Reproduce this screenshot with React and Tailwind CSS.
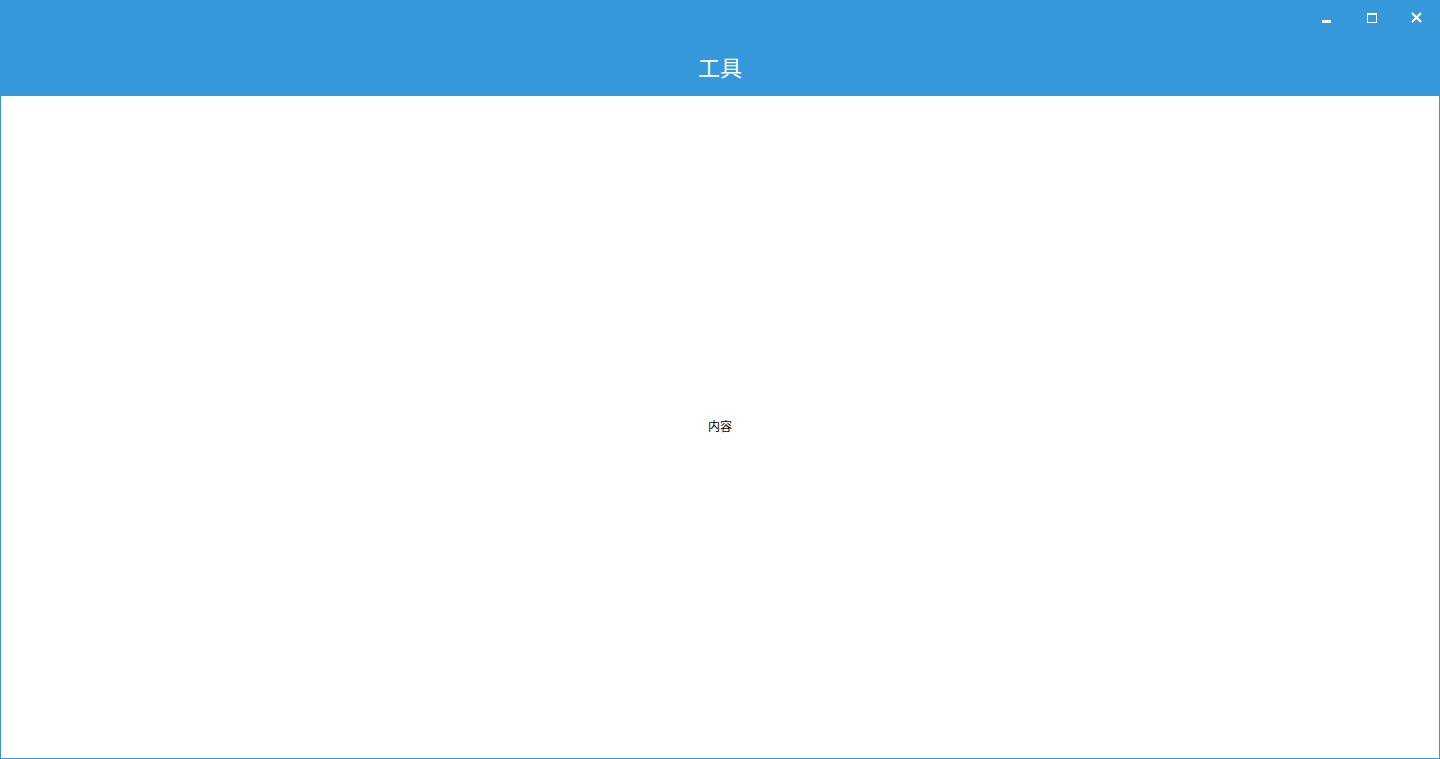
function TitleButton({ children }) {
  return (
    <button className="w-[45px] h-[36px] flex items-center justify-center text-white hover:bg-white/10">
      {children}
    </button>
  );
}

export default function App() {
  return (
    <div
      className="w-[1440px] h-[759px] flex flex-col bg-white"
      style={{ fontFamily: '"Noto Sans CJK SC", "Liberation Sans", sans-serif' }}
    >
      <div className="h-[96px] bg-[#3598db] flex flex-col">
        <div className="h-[40px] flex justify-end items-start pr-[1px]">
          <TitleButton>
            <div className="w-[9px] h-[3px] bg-white mt-[7px]" />
          </TitleButton>
          <TitleButton>
            <svg width="10" height="10" viewBox="0 0 10 10" className="mt-[-1px]">
              <rect x="0" y="0" width="10" height="2" fill="white" />
              <rect x="0.5" y="1.5" width="9" height="8" fill="none" stroke="white" strokeWidth="1" />
            </svg>
          </TitleButton>
          <TitleButton>
            <svg width="11" height="11" viewBox="0 0 11 11" className="mt-[-1px]">
              <path d="M1 1 L10 10 M10 1 L1 10" stroke="white" strokeWidth="2" />
            </svg>
          </TitleButton>
        </div>
        <div className="flex-1 flex items-center justify-center pb-[4px]">
          <h1 className="text-white text-[22px] leading-none">工具</h1>
        </div>
      </div>
      <div className="flex-1 border border-t-0 border-[#3598db] flex items-center justify-center pb-[2px]">
        <span className="text-[12px] text-black">内容</span>
      </div>
    </div>
  );
}
